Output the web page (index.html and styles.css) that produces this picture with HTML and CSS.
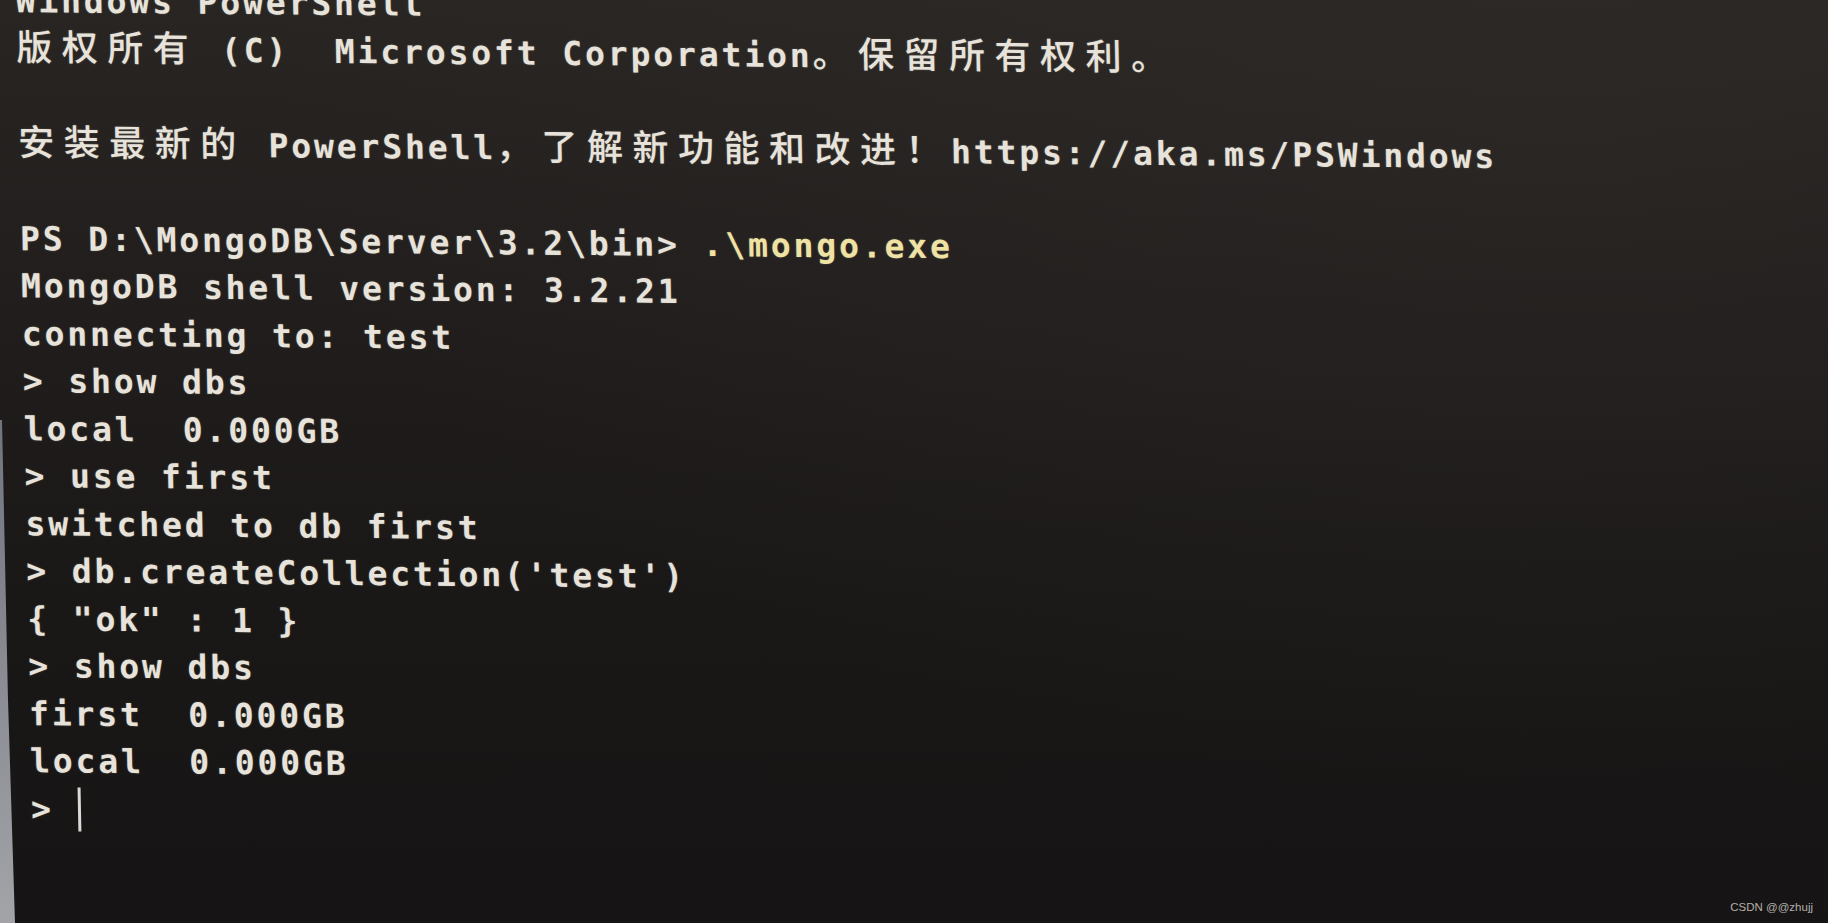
FILE: index.html
```html
<!DOCTYPE html>
<html lang="zh-CN">
<head>
    <meta charset="UTF-8">
    <meta name="viewport" content="width=device-width, initial-scale=1.0">
    <title>Windows PowerShell - mongo.exe</title>
    <link rel="stylesheet" href="styles.css">
</head>
<body>
    <div class="photo">
        <div class="screen">
            <div class="line">Windows PowerShell</div>
            <div class="line"><span class="cjk">版权所有</span> (C)  Microsoft Corporation<span class="cjk">。保留所有权利。</span></div>
            <div class="line blank"></div>
            <div class="line"><span class="cjk">安装最新的</span> PowerShell<span class="cjk">，了解新功能和改进！</span>https://aka.ms/PSWindows</div>
            <div class="line blank"></div>
            <div class="line">PS D:\MongoDB\Server\3.2\bin&gt; <span class="cmd">.\mongo.exe</span></div>
            <div class="line">MongoDB shell version: 3.2.21</div>
            <div class="line">connecting to: test</div>
            <div class="line">&gt; show dbs</div>
            <div class="line">local  0.000GB</div>
            <div class="line">&gt; use first</div>
            <div class="line">switched to db first</div>
            <div class="line">&gt; db.createCollection('test')</div>
            <div class="line">{ "ok" : 1 }</div>
            <div class="line">&gt; show dbs</div>
            <div class="line">first  0.000GB</div>
            <div class="line">local  0.000GB</div>
            <div class="line">&gt; <span class="cursor"></span></div>
        </div>
        <div class="bezel"></div>
        <div class="watermark">CSDN @@zhujj</div>
    </div>
</body>
</html>
```

FILE: styles.css
```css
/* Foto de la consola de PowerShell */
:root {
    --text-color: #e7e3da;
    --cmd-color: #efe2a2;
    --row: 47.5px;
}

* {
    margin: 0;
    padding: 0;
    box-sizing: border-box;
}

html, body {
    width: 100%;
    height: 100%;
    overflow: hidden;
}

body {
    background-color: #1b1918;
}

.photo {
    position: relative;
    width: 100%;
    height: 100%;
    overflow: hidden;
    background:
        radial-gradient(ellipse at 85% 0%, rgba(50, 46, 44, 0.45), rgba(50, 46, 44, 0) 60%),
        linear-gradient(180deg, #282523 0%, #201d1c 35%, #1a1817 65%, #161414 100%);
}

.screen {
    margin-top: -23px;
    padding-left: 15px;
    transform: skew(1.1deg, 0.5deg);
    transform-origin: 0 0;
    font-family: "DejaVu Sans Mono", "Noto Sans CJK SC", monospace;
    font-size: 33px;
    font-weight: bold;
    letter-spacing: 2.88px;
    line-height: var(--row);
    color: var(--text-color);
    text-shadow: 0 0 2px rgba(255, 250, 240, 0.25);
}

.line {
    white-space: pre;
    height: var(--row);
}

.cjk {
    font-family: "Noto Sans CJK SC", sans-serif;
    font-size: 36px;
    font-weight: 500;
    letter-spacing: 9.5px;
    line-height: 1;
}

.cmd {
    color: var(--cmd-color);
}

.cursor {
    display: inline-block;
    width: 3px;
    height: 44px;
    margin-left: 1px;
    vertical-align: -11px;
    background-color: #dcdad4;
}

/* borde del monitor en la esquina inferior izquierda */
.bezel {
    position: absolute;
    left: 0;
    top: 0;
    width: 20px;
    height: 100%;
    background: linear-gradient(180deg, #4a5260 0%, #7d8088 60%, #a2a4a8 100%);
    clip-path: polygon(0 420px, 2px 420px, 8px 700px, 15px 100%, 0 100%);
}

.watermark {
    position: absolute;
    right: 15px;
    bottom: 10px;
    font-family: "Liberation Sans", Arial, sans-serif;
    font-size: 11.5px;
    color: #b3b0ab;
}
```
